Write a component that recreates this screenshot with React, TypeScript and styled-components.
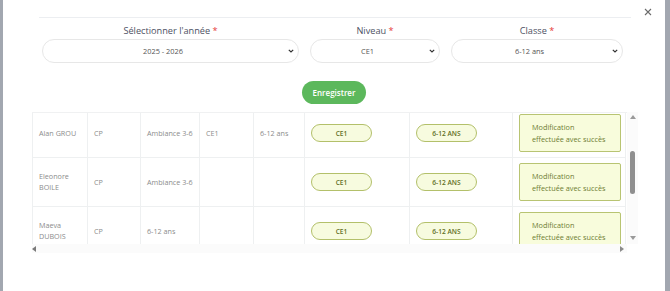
import React, { useLayoutEffect, useRef } from "react";
import styled, { createGlobalStyle } from "styled-components";

const Global = createGlobalStyle`
  html, body { margin: 0; padding: 0; }
  body {
    width: 670px;
    height: 291px;
    overflow: hidden;
    background: #a2a7b0;
    font-family: "Open Sans", "Liberation Sans", sans-serif;
  }
`;

const Modal = styled.div`
  margin-left: 3px;
  width: 662px;
  height: 291px;
  background: #ffffff;
  display: flex;
  flex-direction: column;
`;

const TopBar = styled.div`
  display: flex;
  align-items: flex-start;
  padding-left: 36px;
`;

const HeaderRule = styled.div`
  flex: 1;
  height: 17px;
  border-bottom: 1px solid #eceef1;
`;

const CloseButton = styled.button`
  width: 34px;
  height: 22px;
  padding: 0;
  border: 0;
  background: transparent;
  display: flex;
  align-items: center;
  justify-content: center;
  margin-top: 1px;
`;

const FormRow = styled.div`
  display: flex;
  padding: 2px 0 0 39px;
  gap: 11px;
`;

const Field = styled.div<{ $w: number }>`
  width: ${(p) => p.$w}px;
  display: flex;
  flex-direction: column;
  align-items: center;
  gap: 2px;
`;

const Label = styled.label`
  font-size: 9.2px;
  line-height: 12px;
  color: #4d5163;
`;

const Req = styled.span`
  color: #e53935;
`;

const SelectBox = styled.div`
  width: 100%;
  height: 24px;
  box-sizing: border-box;
  border: 1px solid #e7e7e7;
  border-radius: 12px;
  display: flex;
  align-items: center;
`;

const SelectValue = styled.span`
  flex: 1;
  text-align: center;
  font-size: 7.4px;
  color: #555;
`;

const Chevron = styled.span`
  width: 15px;
  display: flex;
  justify-content: center;
`;

const ButtonRow = styled.div`
  display: flex;
  justify-content: center;
  padding-top: 18px;
`;

const SaveButton = styled.button`
  width: 64px;
  height: 23px;
  border: 0;
  border-radius: 12px;
  background: #5cb85c;
  color: #fff;
  font-family: "Open Sans", "Liberation Sans", sans-serif;
  font-size: 8px;
  font-weight: 600;
  padding: 0;
`;

const TableFrame = styled.div`
  margin: 8px 0 0 29px;
  width: 606px;
  height: 141px;
  display: grid;
  grid-template-columns: 595px 11px;
  grid-template-rows: 132px 9px;
`;

const Viewport = styled.div`
  overflow: hidden;
  border-top: 1px solid #f0f1f2;
  box-sizing: border-box;
`;

const Table = styled.table`
  border-collapse: collapse;
  table-layout: fixed;
  width: 593px;
`;

const Row = styled.tr`
  height: 49px;
`;

const Cell = styled.td`
  border: 1px solid #eef0f1;
  padding: 0 5px 0 6px;
  font-size: 7.2px;
  line-height: 11px;
  color: #8c8c8c;
  vertical-align: middle;
`;

const Pill = styled.span`
  display: flex;
  align-items: center;
  justify-content: center;
  width: 61px;
  height: 18px;
  box-sizing: border-box;
  border: 1px solid #b3c06a;
  border-radius: 9px;
  background: #f7fbdf;
  color: #5f6e22;
  font-size: 6.6px;
  font-weight: 600;
`;

const Message = styled.div`
  width: 102px;
  height: 38px;
  box-sizing: border-box;
  border: 1px solid #b8c472;
  border-radius: 2px;
  background: #f8fcdc;
  color: #6e7d32;
  font-size: 7.3px;
  line-height: 12px;
  padding: 6px 0 0 12px;
`;

const VScroll = styled.div`
  display: flex;
  flex-direction: column;
  align-items: center;
  background: #fbfbfb;
`;

const HScroll = styled.div`
  display: flex;
  align-items: center;
  justify-content: space-between;
  padding: 0 3px 0 0;
  background: #fbfbfb;
`;

const Corner = styled.div`
  background: #ffffff;
`;

const Track = styled.div`
  flex: 1;
  width: 100%;
  display: flex;
  flex-direction: column;
  align-items: center;
`;

const Thumb = styled.div<{ $offset: number; $size: number }>`
  margin-top: ${(p) => p.$offset}px;
  width: 5px;
  height: ${(p) => p.$size}px;
  border-radius: 3px;
  background: #8f8f8f;
`;

const Arrow = styled.span<{ $dir: "up" | "down" | "left" | "right" }>`
  width: 0;
  height: 0;
  border-style: solid;
  ${(p) =>
    p.$dir === "up"
      ? "border-width: 0 3px 4px 3px; border-color: transparent transparent #9a9a9a transparent; margin: 3px 0 5px;"
      : p.$dir === "down"
      ? "border-width: 4px 3px 0 3px; border-color: #9a9a9a transparent transparent transparent; margin: 5px 0 4px;"
      : p.$dir === "left"
      ? "border-width: 3px 4px 3px 0; border-color: transparent #7a7a7a transparent transparent;"
      : "border-width: 3px 0 3px 4px; border-color: transparent transparent transparent #8a8a8a;"}
`;

type Student = {
  name: string;
  niveau: string;
  classe: string;
  nextNiveau: string;
  nextClasse: string;
};

const students: Student[] = [
  { name: "Alan GROU", niveau: "CP", classe: "Ambiance 3-6", nextNiveau: "CE1", nextClasse: "6-12 ans" },
  { name: "Eleonore BOILE", niveau: "CP", classe: "Ambiance 3-6", nextNiveau: "", nextClasse: "" },
  { name: "Maeva DUBOIS", niveau: "CP", classe: "6-12 ans", nextNiveau: "", nextClasse: "" },
];

const colWidths = [55, 53, 59, 54, 51, 105, 103, 113];

const ChevronIcon = () => (
  <svg width="6" height="4" viewBox="0 0 6 4">
    <path d="M0.8 0.8 L3 3 L5.2 0.8" fill="none" stroke="#333" strokeWidth="1.2" />
  </svg>
);

const CloseIcon = () => (
  <svg width="8" height="8" viewBox="0 0 8 8">
    <path d="M1 1 L7 7 M7 1 L1 7" stroke="#6b6b6b" strokeWidth="1.1" />
  </svg>
);

const Select = ({ value }: { value: string }) => (
  <SelectBox>
    <SelectValue>{value}</SelectValue>
    <Chevron>
      <ChevronIcon />
    </Chevron>
  </SelectBox>
);

export default function App() {
  const viewportRef = useRef<HTMLDivElement>(null);
  useLayoutEffect(() => {
    if (viewportRef.current) viewportRef.current.scrollTop = 5;
  }, []);

  return (
    <>
      <Global />
      <Modal>
        <TopBar>
          <HeaderRule />
          <CloseButton aria-label="Fermer">
            <CloseIcon />
          </CloseButton>
        </TopBar>
        <FormRow>
          <Field $w={257}>
            <Label>
              Sélectionner l'année <Req>*</Req>
            </Label>
            <Select value="2025 - 2026" />
          </Field>
          <Field $w={130}>
            <Label>
              Niveau <Req>*</Req>
            </Label>
            <Select value="CE1" />
          </Field>
          <Field $w={172}>
            <Label>
              Classe <Req>*</Req>
            </Label>
            <Select value="6-12 ans" />
          </Field>
        </FormRow>
        <ButtonRow>
          <SaveButton>Enregistrer</SaveButton>
        </ButtonRow>
        <TableFrame>
          <Viewport ref={viewportRef}>
            <Table>
              <colgroup>
                {colWidths.map((w, i) => (
                  <col key={i} style={{ width: w }} />
                ))}
              </colgroup>
              <tbody>
                {students.map((s) => (
                  <Row key={s.name}>
                    <Cell>{s.name}</Cell>
                    <Cell>{s.niveau}</Cell>
                    <Cell>{s.classe}</Cell>
                    <Cell>{s.nextNiveau}</Cell>
                    <Cell>{s.nextClasse}</Cell>
                    <Cell>
                      <Pill>CE1</Pill>
                    </Cell>
                    <Cell>
                      <Pill>6-12 ANS</Pill>
                    </Cell>
                    <Cell>
                      <Message>
                        Modification
                        <br />
                        effectuée avec succès
                      </Message>
                    </Cell>
                  </Row>
                ))}
              </tbody>
            </Table>
          </Viewport>
          <VScroll>
            <Arrow $dir="up" />
            <Track>
              <Thumb $offset={27} $size={43} />
            </Track>
            <Arrow $dir="down" />
          </VScroll>
          <HScroll>
            <Arrow $dir="left" />
            <Arrow $dir="right" />
          </HScroll>
          <Corner />
        </TableFrame>
      </Modal>
    </>
  );
}
